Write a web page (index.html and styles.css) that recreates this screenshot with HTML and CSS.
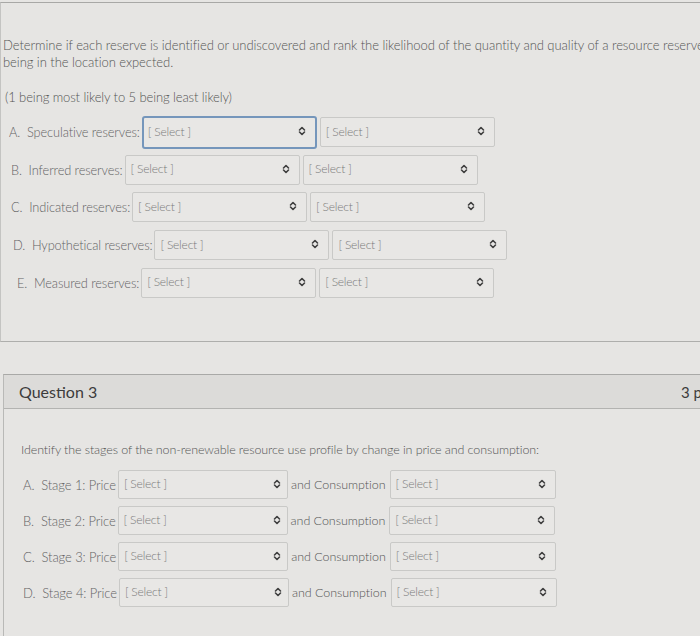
FILE: index.html
```html
<!DOCTYPE html>
<html>
<head>
<meta charset="utf-8">
<link rel="stylesheet" href="styles.css">
</head>
<body>
<div class="page">
  <section class="card card-top">
    <p class="lead">Determine if each reserve is identified or undiscovered and rank the likelihood of the quantity and quality of a resource reserve being in the location expected.</p>
    <p class="note">(1 being most likely to 5 being least likely)</p>
    <div class="rows">
      <div class="row r-a"><span class="label">A.&nbsp; Speculative reserves:</span>
        <div class="sel focus"><span>[ Select ]</span><svg class="chev" viewBox="0 0 8 10"><path d="M1.5 4 L4 1.5 L6.5 4 M1.5 6 L4 8.5 L6.5 6"/></svg></div>
        <div class="sel"><span>[ Select ]</span><svg class="chev" viewBox="0 0 8 10"><path d="M1.5 4 L4 1.5 L6.5 4 M1.5 6 L4 8.5 L6.5 6"/></svg></div>
      </div>
      <div class="row r-b"><span class="label">B.&nbsp; Inferred reserves:</span>
        <div class="sel"><span>[ Select ]</span><svg class="chev" viewBox="0 0 8 10"><path d="M1.5 4 L4 1.5 L6.5 4 M1.5 6 L4 8.5 L6.5 6"/></svg></div>
        <div class="sel"><span>[ Select ]</span><svg class="chev" viewBox="0 0 8 10"><path d="M1.5 4 L4 1.5 L6.5 4 M1.5 6 L4 8.5 L6.5 6"/></svg></div>
      </div>
      <div class="row r-c"><span class="label">C.&nbsp; Indicated reserves:</span>
        <div class="sel"><span>[ Select ]</span><svg class="chev" viewBox="0 0 8 10"><path d="M1.5 4 L4 1.5 L6.5 4 M1.5 6 L4 8.5 L6.5 6"/></svg></div>
        <div class="sel"><span>[ Select ]</span><svg class="chev" viewBox="0 0 8 10"><path d="M1.5 4 L4 1.5 L6.5 4 M1.5 6 L4 8.5 L6.5 6"/></svg></div>
      </div>
      <div class="row r-d"><span class="label">D.&nbsp; Hypothetical reserves:</span>
        <div class="sel"><span>[ Select ]</span><svg class="chev" viewBox="0 0 8 10"><path d="M1.5 4 L4 1.5 L6.5 4 M1.5 6 L4 8.5 L6.5 6"/></svg></div>
        <div class="sel"><span>[ Select ]</span><svg class="chev" viewBox="0 0 8 10"><path d="M1.5 4 L4 1.5 L6.5 4 M1.5 6 L4 8.5 L6.5 6"/></svg></div>
      </div>
      <div class="row r-e"><span class="label">E.&nbsp; Measured reserves:</span>
        <div class="sel"><span>[ Select ]</span><svg class="chev" viewBox="0 0 8 10"><path d="M1.5 4 L4 1.5 L6.5 4 M1.5 6 L4 8.5 L6.5 6"/></svg></div>
        <div class="sel"><span>[ Select ]</span><svg class="chev" viewBox="0 0 8 10"><path d="M1.5 4 L4 1.5 L6.5 4 M1.5 6 L4 8.5 L6.5 6"/></svg></div>
      </div>
    </div>
  </section>

  <section class="card card-q3">
    <header class="q-head">
      <h2>Question 3</h2>
      <span class="pts">3 pts</span>
    </header>
    <div class="q-body">
      <p class="lead2">Identify the stages of the non-renewable resource use profile by change in price and consumption:</p>
      <div class="row2"><span class="label2">A.&nbsp; Stage 1: Price</span>
        <div class="sel sel2"><span>[ Select ]</span><svg class="chev" viewBox="0 0 8 10"><path d="M1.5 4 L4 1.5 L6.5 4 M1.5 6 L4 8.5 L6.5 6"/></svg></div>
        <span class="and">and Consumption</span>
        <div class="sel sel3"><span>[ Select ]</span><svg class="chev" viewBox="0 0 8 10"><path d="M1.5 4 L4 1.5 L6.5 4 M1.5 6 L4 8.5 L6.5 6"/></svg></div>
      </div>
      <div class="row2"><span class="label2">B.&nbsp; Stage 2: Price</span>
        <div class="sel sel2"><span>[ Select ]</span><svg class="chev" viewBox="0 0 8 10"><path d="M1.5 4 L4 1.5 L6.5 4 M1.5 6 L4 8.5 L6.5 6"/></svg></div>
        <span class="and">and Consumption</span>
        <div class="sel sel3"><span>[ Select ]</span><svg class="chev" viewBox="0 0 8 10"><path d="M1.5 4 L4 1.5 L6.5 4 M1.5 6 L4 8.5 L6.5 6"/></svg></div>
      </div>
      <div class="row2"><span class="label2">C.&nbsp; Stage 3: Price</span>
        <div class="sel sel2"><span>[ Select ]</span><svg class="chev" viewBox="0 0 8 10"><path d="M1.5 4 L4 1.5 L6.5 4 M1.5 6 L4 8.5 L6.5 6"/></svg></div>
        <span class="and">and Consumption</span>
        <div class="sel sel3"><span>[ Select ]</span><svg class="chev" viewBox="0 0 8 10"><path d="M1.5 4 L4 1.5 L6.5 4 M1.5 6 L4 8.5 L6.5 6"/></svg></div>
      </div>
      <div class="row2"><span class="label2">D.&nbsp; Stage 4: Price</span>
        <div class="sel sel2"><span>[ Select ]</span><svg class="chev" viewBox="0 0 8 10"><path d="M1.5 4 L4 1.5 L6.5 4 M1.5 6 L4 8.5 L6.5 6"/></svg></div>
        <span class="and">and Consumption</span>
        <div class="sel sel3"><span>[ Select ]</span><svg class="chev" viewBox="0 0 8 10"><path d="M1.5 4 L4 1.5 L6.5 4 M1.5 6 L4 8.5 L6.5 6"/></svg></div>
      </div>
    </div>
  </section>
</div>
</body>
</html>
```

FILE: styles.css
```css
* { box-sizing: border-box; }
html, body {
  margin: 0;
  padding: 0;
  background: #e6e5e3;
  font-family: Lato, "Open Sans", sans-serif;
  font-weight: 300;
  color: #5a5a5a;
  overflow: hidden;
}
.page {
  width: 700px;
  height: 636px;
  padding-top: 2px;
  overflow: hidden;
}
.card {
  width: 720px;
}
.card-top {
  border-top: 1px solid #a8a8a6;
  border-left: 1px solid #c4c4c2;
  border-bottom: 1px solid #aeaeac;
  height: 340px;
  padding: 34px 0 0 2px;
}
.lead {
  margin: 0;
  font-size: 13px;
  line-height: 17px;
  width: 712px;
  letter-spacing: -0.05px;
  color: #555;
}
.note {
  margin: 18px 0 0 2px;
  font-size: 13px;
  line-height: 17px;
  letter-spacing: -0.1px;
  color: #555;
}
.rows {
  margin-top: 11px;
}
.row {
  display: flex;
  align-items: center;
  height: 30px;
  margin-bottom: 7.7px;
  padding-left: 6px;
}
.r-b, .r-c { padding-left: 8px; }
.r-d { padding-left: 10px; }
.r-e { padding-left: 14px; }
.label {
  font-size: 12.8px;
  color: #636363;
  margin-right: 2px;
  letter-spacing: -0.1px;
  white-space: nowrap;
}
.sel {
  position: relative;
  width: 175px;
  height: 30px;
  border: 1px solid #c9c9c7;
  border-radius: 2px;
  background: #e8e7e5;
  margin-right: 3px;
  display: flex;
  align-items: center;
  padding-left: 5px;
  padding-bottom: 2px;
  font-size: 12px;
  color: #7a7a7a;
}
.sel span { flex: 1; letter-spacing: -0.2px; }
.sel.focus {
  border: 2px solid #7596bb;
  height: 33px;
  padding-left: 4px;
  border-radius: 3px;
}
.chev {
  width: 8px;
  height: 10px;
  margin-right: 9px;
  flex: none;
}
.chev path {
  fill: none;
  stroke: #3f3f3f;
  stroke-width: 1.6;
  stroke-linecap: round;
  stroke-linejoin: round;
}
.card-q3 {
  margin: 32px 0 0 3px;
  border-top: 1px solid #a9a9a7;
  border-left: 1px solid #b9b9b7;
  height: 300px;
}
.q-head {
  height: 34px;
  background: #dcdbd9;
  border-bottom: 1px solid #b3b3b1;
  display: flex;
  align-items: center;
  justify-content: space-between;
  padding: 0 0 0 15px;
  width: 697px;
}
.q-head h2 {
  margin: 0;
  font-size: 16px;
  font-weight: 400;
  color: #3c3c3c;
}
.pts {
  font-size: 15px;
  color: #3c3c3c;
  font-weight: 400;
  white-space: nowrap;
  width: 20px;
  overflow: hidden;
}
.q-body {
  padding: 33px 0 0 17px;
}
.lead2 {
  margin: 0 0 12px;
  font-size: 12.5px;
  line-height: 16px;
  letter-spacing: -0.1px;
  color: #555;
}
.row2 {
  display: flex;
  align-items: center;
  height: 29px;
  margin-bottom: 7px;
  padding-left: 2px;
}
.label2 {
  font-size: 13px;
  color: #636363;
  margin-right: 2px;
  letter-spacing: -0.1px;
  white-space: nowrap;
}
.sel2 {
  width: 170px;
  height: 29px;
}
.sel3 {
  width: 166px;
  height: 29px;
}
.and {
  font-size: 12.5px;
  color: #555;
  margin-right: 4px;
  letter-spacing: -0.05px;
  white-space: nowrap;
}
.sel2 .chev { margin-right: 6px; }
```
